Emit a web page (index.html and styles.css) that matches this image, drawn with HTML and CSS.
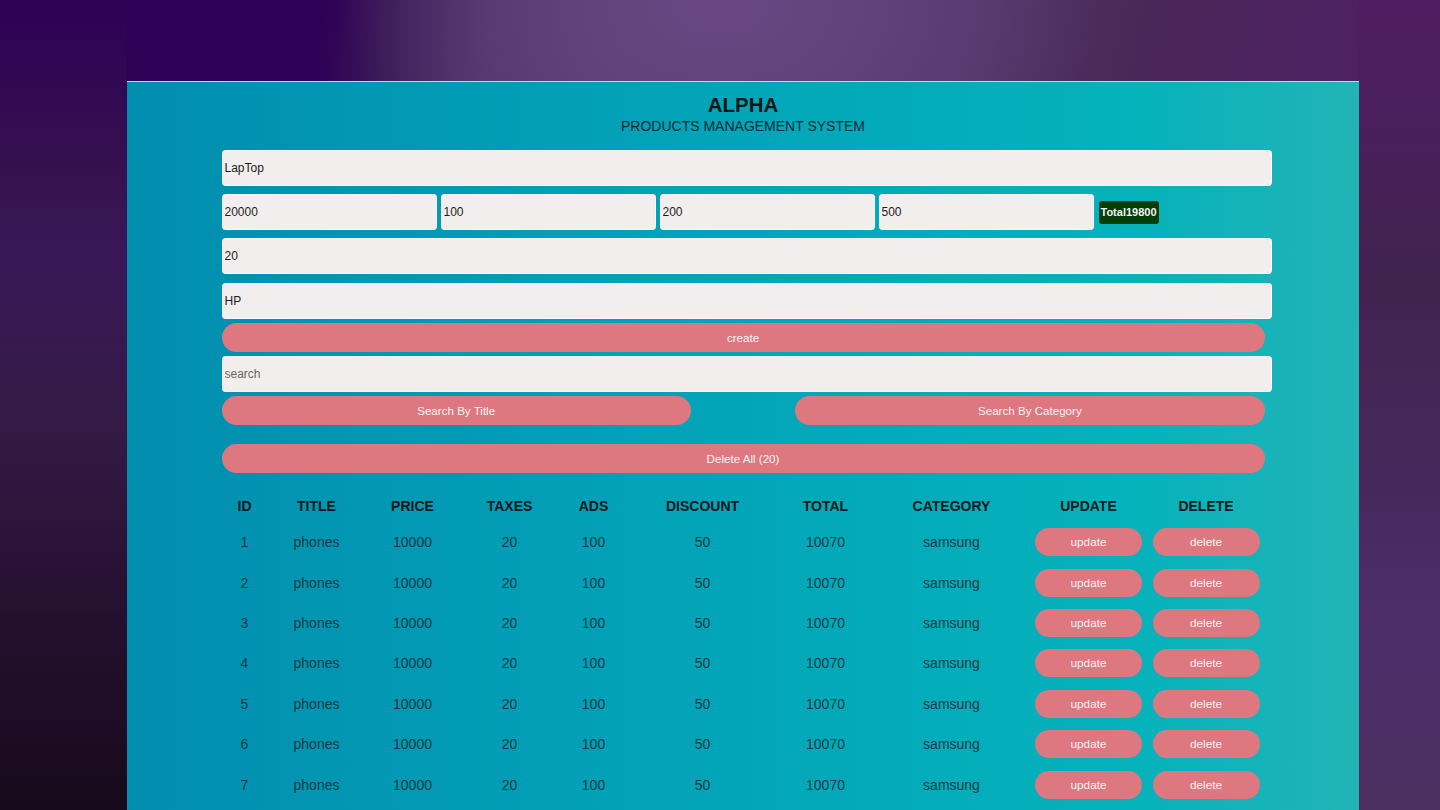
FILE: index.html
```html
<!DOCTYPE html>
<html lang="en">
<head>
<meta charset="utf-8">
<title>CRUDS</title>
<link rel="stylesheet" href="styles.css">
</head>
<body>
<div class="app">
  <header class="head">
    <h1 class="brand">ALPHA</h1>
    <p class="tagline">PRODUCTS MANAGEMENT SYSTEM</p>
  </header>
  <main class="content">
    <section class="form">
      <input class="field field-full" type="text" value="LapTop">
      <div class="price-row">
        <input class="field field-price" type="number" value="20000">
        <input class="field field-price" type="number" value="100">
        <input class="field field-price" type="number" value="200">
        <input class="field field-price" type="number" value="500">
        <small class="total">Total19800</small>
      </div>
      <input class="field field-full gap-8" type="number" value="20">
      <input class="field field-full gap-9" type="text" value="HP">
      <button class="btn btn-wide gap-4">create</button>
    </section>
    <section class="search">
      <input class="field field-full" type="text" placeholder="search">
      <div class="search-btns">
        <button class="btn btn-half">Search By Title</button>
        <button class="btn btn-half">Search By Category</button>
      </div>
    </section>
    <div class="delete-all">
      <button class="btn btn-wide">Delete All (20)</button>
    </div>
    <table class="products">
      <colgroup>
        <col class="c-id"><col class="c-title"><col class="c-price"><col class="c-taxes"><col class="c-ads">
        <col class="c-discount"><col class="c-total"><col class="c-category"><col class="c-update"><col class="c-delete">
      </colgroup>
      <thead>
        <tr><th>ID</th><th>TITLE</th><th>PRICE</th><th>TAXES</th><th>ADS</th><th>DISCOUNT</th><th>TOTAL</th><th>CATEGORY</th><th>UPDATE</th><th>DELETE</th></tr>
      </thead>
      <tbody>
        <tr><td>1</td><td>phones</td><td>10000</td><td>20</td><td>100</td><td>50</td><td>10070</td><td>samsung</td><td><button class="btn btn-row">update</button></td><td><button class="btn btn-row">delete</button></td></tr>
        <tr><td>2</td><td>phones</td><td>10000</td><td>20</td><td>100</td><td>50</td><td>10070</td><td>samsung</td><td><button class="btn btn-row">update</button></td><td><button class="btn btn-row">delete</button></td></tr>
        <tr><td>3</td><td>phones</td><td>10000</td><td>20</td><td>100</td><td>50</td><td>10070</td><td>samsung</td><td><button class="btn btn-row">update</button></td><td><button class="btn btn-row">delete</button></td></tr>
        <tr><td>4</td><td>phones</td><td>10000</td><td>20</td><td>100</td><td>50</td><td>10070</td><td>samsung</td><td><button class="btn btn-row">update</button></td><td><button class="btn btn-row">delete</button></td></tr>
        <tr><td>5</td><td>phones</td><td>10000</td><td>20</td><td>100</td><td>50</td><td>10070</td><td>samsung</td><td><button class="btn btn-row">update</button></td><td><button class="btn btn-row">delete</button></td></tr>
        <tr><td>6</td><td>phones</td><td>10000</td><td>20</td><td>100</td><td>50</td><td>10070</td><td>samsung</td><td><button class="btn btn-row">update</button></td><td><button class="btn btn-row">delete</button></td></tr>
        <tr><td>7</td><td>phones</td><td>10000</td><td>20</td><td>100</td><td>50</td><td>10070</td><td>samsung</td><td><button class="btn btn-row">update</button></td><td><button class="btn btn-row">delete</button></td></tr>
      </tbody>
    </table>
  </main>
</div>
</body>
</html>
```
FILE: styles.css
```css
* { box-sizing: border-box; }

html, body {
  height: 810px;
  overflow: hidden;
}

body {
  margin: 0;
  font-family: "Liberation Sans", Arial, sans-serif;
  background:
    linear-gradient(to bottom, #2e0056 0px, #36124f 180px, #3a1858 260px, #341a45 420px, #2a1236 560px, #24102e 620px, #170a1c 810px) left top / 127px 100% no-repeat,
    linear-gradient(to bottom, #4f1d62 0px, #4a1f5c 120px, #42234f 280px, #47285c 480px, #4e2d6a 620px, #4b3060 810px) right top / 81px 100% no-repeat,
    radial-gradient(ellipse 380px 220px at 720px 10px, #6a4782 0%, rgba(100, 66, 124, 0.75) 45%, rgba(85, 55, 105, 0) 100%),
    linear-gradient(100deg, #2e0056 0px, #2e0056 320px, #3a1856 390px, #4e3164 480px, #5e3f74 620px, #5e3f74 800px, #533467 960px, #4a2858 1120px, #4d2260 1300px, #4f1d62 1440px);
}

.app {
  margin: 81px 0 0 127px;
  width: 1232px;
  min-height: 800px;
  border-top: 1px solid #d9cadc;
  background: linear-gradient(to right, #028daf 0%, #029fb6 35%, #03acba 65%, #06b2bb 82%, #22b4b6 100%);
  padding-top: 10px;
}

.head {
  text-align: center;
}

.brand {
  margin: 0;
  font-size: 20.5px;
  line-height: 25px;
  font-weight: 700;
  color: #0d1516;
}

.tagline {
  margin: 0;
  font-size: 14px;
  line-height: 18px;
  color: #0c2a36;
}

.content {
  width: 1043px;
  margin: 15px auto 0;
}

.form, .search {
  display: flex;
  flex-direction: column;
}

.field {
  display: block;
  height: 36px;
  border: none;
  border-radius: 4px;
  background: #f2eeee;
  padding: 0 3px;
  font-family: inherit;
  font-size: 12px;
  color: #1c1c1c;
  outline: none;
  box-shadow: inset 0 0 0 1px rgba(255, 255, 255, 0.5);
}

.field::placeholder { color: #666666; }

.field-full { width: 1050px; }

.price-row {
  display: flex;
  align-items: center;
  gap: 4px;
  margin-top: 8px;
}

.field-price { width: 215px; }

.total {
  margin-left: 1px;
  height: 23px;
  line-height: 23px;
  padding: 0 2px;
  border-radius: 3px;
  background: #033d07;
  color: #f4f4f4;
  font-size: 11px;
  font-weight: 700;
}

.gap-8 { margin-top: 8px; }
.gap-9 { margin-top: 9px; }
.gap-4 { margin-top: 4px; }

.btn {
  height: 29px;
  border: none;
  border-radius: 15px;
  background: #dd7880;
  color: #fcf2f2;
  font-family: inherit;
  font-size: 11.6px;
  padding: 0;
  cursor: pointer;
}

.btn-wide { width: 1043px; display: block; }

.search { margin-top: 4px; }

.search-btns {
  display: flex;
  justify-content: space-between;
  margin-top: 4px;
}

.btn-half { width: 45%; }

.delete-all { margin-top: 19px; }

.products {
  width: 1043px;
  margin-top: 17px;
  border-collapse: collapse;
  table-layout: fixed;
  text-align: center;
}

.c-id { width: 46px; }
.c-title { width: 98px; }
.c-price { width: 94px; }
.c-taxes { width: 100px; }
.c-ads { width: 68px; }
.c-discount { width: 150px; }
.c-total { width: 96px; }
.c-category { width: 156px; }
.c-update { width: 118px; }
.c-delete { width: 117px; }

.products th {
  height: 32px;
  padding: 0;
  font-size: 14px;
  font-weight: 700;
  color: #0b1819;
}

.products td {
  height: 40.4px;
  padding: 0;
  font-size: 14px;
  color: #143a46;
}

.btn-row {
  width: 107px;
  height: 28px;
  border-radius: 14px;
  font-size: 11.8px;
  vertical-align: middle;
}
```
